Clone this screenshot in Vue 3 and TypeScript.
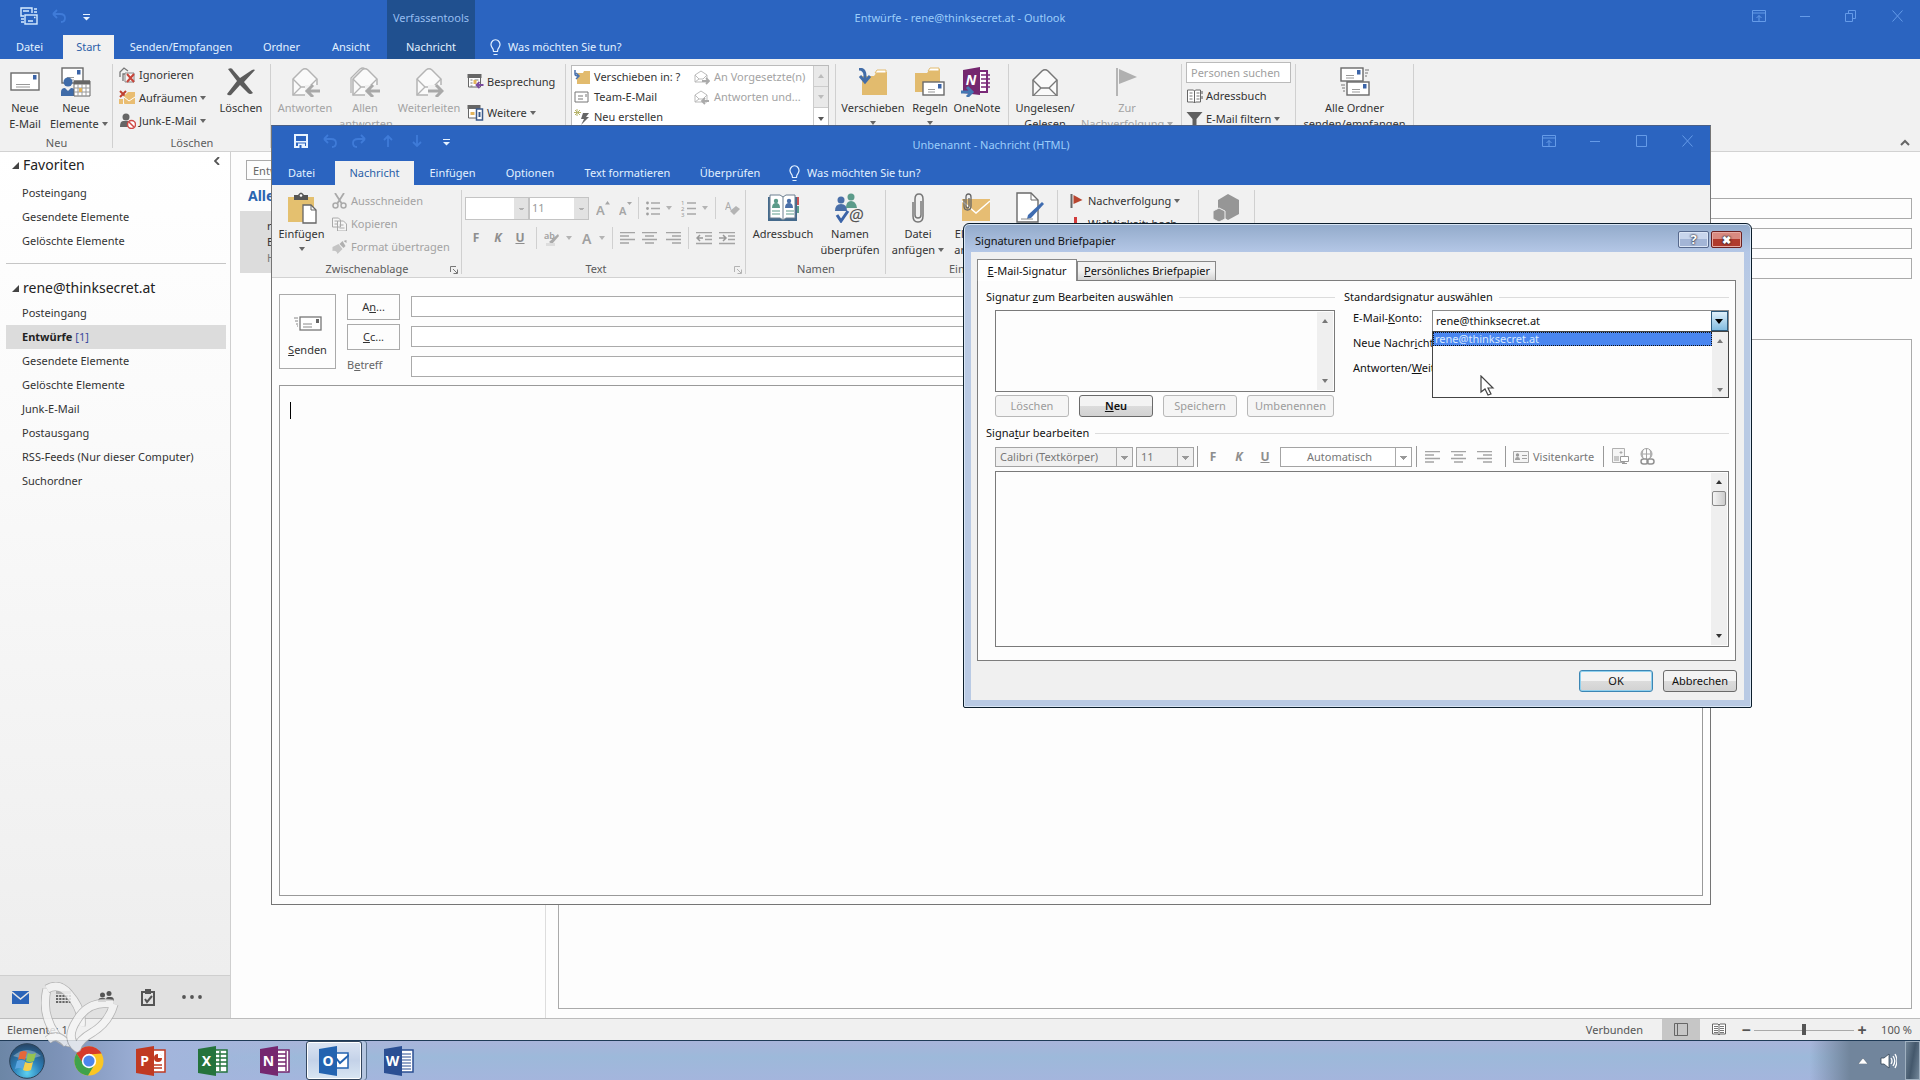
<script setup lang="ts">
import { h, ref } from 'vue'

type IconDef = [number, number, string]

const envelope = (x: number, y: number, w: number, hh: number) =>
  `<rect x="${x}" y="${y}" width="${w}" height="${hh}" fill="#fff" stroke="#6a6a6a" stroke-width="1.4"/>` +
  `<rect x="${x + w - 6}" y="${y + 2}" width="3.5" height="4.5" fill="#3b64a8"/>` +
  `<path d="M${x + 5} ${y + hh - 5.5}h${w - 14}M${x + 5} ${y + hh - 3}h${w - 14}" stroke="#999" stroke-width="1"/>`

const openMail = (c: string) =>
  `<path d="M3 12 12 3Q15 .5 18 3l9 9v16H3z" fill="#fafafa" stroke="${c}" stroke-width="1.5"/>` +
  `<path d="M3 12l8 8h8l8-8M3 28l8-8M27 28l-8-8" fill="none" stroke="${c}" stroke-width="1.3"/>`

const officeTile = (letter: string, color: string, sheet: string) =>
  `<rect x="13" y="4" width="16" height="22" fill="#fff" stroke="${color}" stroke-width="1.5"/>${sheet}` +
  `<path d="M0 3 18 0v30L0 27z" fill="${color}"/>` +
  `<text x="8.5" y="20" text-anchor="middle" font-family="Noto Sans, sans-serif" font-weight="700" font-size="14" fill="#fff">${letter}</text>`

const icons: Record<string, IconDef> = {
  sendAll: [18, 18, '<g fill="none" stroke="#d8ecff" stroke-width="1.4"><path d="M12 6V1H1v8h3M14 2h3M14 5h3"/><rect x="5" y="8" width="12" height="9"/><path d="M3 4h6M1 12h3M1 15h3M8 14h5"/><path d="M14 10.500h1.500"/></g>'],
  undo: [14, 14, '<path d="M1 5h7q5 0 5 4t-4 4M1 5l4-4M1 5l4 4" fill="none" stroke="#3f7bd8" stroke-width="1.800"/>'],
  redo: [14, 14, '<path d="M13 5H6Q1 5 1 9t4 4M13 5 9 1M13 5 9 9" fill="none" stroke="#3f7bd8" stroke-width="1.800"/>'],
  up: [14, 14, '<path d="M7 13V2M3 6l4-4 4 4" fill="none" stroke="#3f7bd8" stroke-width="1.800"/>'],
  down: [14, 14, '<path d="M7 1v11M3 8l4 4 4-4" fill="none" stroke="#3f7bd8" stroke-width="1.800"/>'],
  more: [7, 7, '<path d="M0 .5h7" stroke="#e6f2ff"/><path d="M0 3h7L3.500 6.500z" fill="#e6f2ff"/>'],
  save: [14, 14, '<path d="M1 1h12v12H1z" fill="none" stroke="#e9f4ff" stroke-width="2"/><path d="M1 7h12v1.500H1zM4 9.500h7V14H4z" fill="#e9f4ff"/><path d="M5.500 11h2v3h-2z" fill="#2b64c0"/>'],
  ribbonOpt: [14, 12, '<path d="M.5.5h13v11H.5zM.5 3h13M7 11V5.500M4.500 8 7 5.500 9.500 8" fill="none" stroke="#659be8"/>'],
  min: [10, 12, '<path d="M0 6.500h10" stroke="#659be8"/>'],
  restore: [12, 12, '<path d="M.5 3.500h7v8h-7zM3.500 3V.5h7v8H8" fill="none" stroke="#659be8"/>'],
  max: [11, 12, '<path d="M.5.5h10v11H.5z" fill="none" stroke="#659be8"/>'],
  close: [11, 12, '<path d="M.5.5l10 11M10.500.5l-10 11" stroke="#659be8"/>'],
  bulb: [11, 17, '<path d="M3.500 12.500Q3.500 10 2 8.500-.5 4.500 3 1.500q2.500-1.500 5 0 3.500 3 1 7Q7.500 10 7.500 12.500zM3.500 15.500h4" fill="none" stroke="#e0efff" stroke-width="1.2"/>'],
  newMail: [30, 20, envelope(1, 1, 28, 17)],
  newItems: [30, 30, envelope(1, 1, 21, 15) + '<circle cx="7" cy="15" r="4.500" fill="#3f6ba8"/><path d="M0 29v-4q0-4 4-4l3 3 3-3q4 0 4 4v4z" fill="#3f6ba8"/><path d="M13 14h16v15H13z" fill="#fff" stroke="#666"/><path d="M13 13.500h16v4H13z" fill="#666"/><path d="M13 21h16M13 25h16M17 17v12M21 17v12M25 17v12" stroke="#999"/><path d="M18 21h3v4h-3z" fill="#e2b55d"/>'],
  ignore: [17, 16, '<path d="M1 10V5l4-4 4 3M4 14V7h9" fill="none" stroke="#777" stroke-width="1.300"/><path d="M6 6h9v9H6z" fill="#f6f6f6" stroke="#888"/><path d="M8 7l7 8M15 7l-7 8" stroke="#c8453a" stroke-width="2"/>'],
  clean: [17, 16, '<path d="M1 1l6 6M7 1 1 7" stroke="#c04030" stroke-width="2"/><path d="M5 6l4-4h7v12H5z" fill="#e9bd72"/><path d="M5 7l5 4 6-4M2 9l3 5" fill="none" stroke="#fff"/><path d="M0 9h4v5H0z" fill="#e9bd72"/>'],
  junk: [17, 16, '<circle cx="7" cy="4" r="3.500" fill="#666"/><path d="M1 14q0-6 3-6h6q3 0 3 6z" fill="#666"/><circle cx="12.500" cy="11.500" r="4" fill="#fff" stroke="#cf4a45" stroke-width="1.500"/><path d="M10 9l5 5" stroke="#cf4a45" stroke-width="1.500"/>'],
  del: [30, 28, '<path d="M2 1q4-2 5 1l7 8L26 2q2-1 3 0L18 14q4 5 9 11-3 2-5 0l-8-8-9 10q-3 1-4-1L11 13z" fill="#5c5c5c"/>'],
  reply: [30, 30, openMail('#b4b4b4') + '<path d="M15 18h15v12H15z" fill="#f1f1f1"/><path d="M30 24H18M23 18l-6 6 6 6" fill="none" stroke="#a9a9a9" stroke-width="3"/>'],
  replyAll: [30, 30, '<path d="M1 26V11l9-9q3-2 5 0" fill="none" stroke="#b4b4b4" stroke-width="1.300"/>' + openMail('#b4b4b4') + '<path d="M15 18h15v12H15z" fill="#f1f1f1"/><path d="M30 24H18M23 18l-6 6 6 6" fill="none" stroke="#a9a9a9" stroke-width="3"/>'],
  forward: [30, 30, openMail('#b4b4b4') + '<path d="M14 18h16v12H14z" fill="#f1f1f1"/><path d="M14 24h13M22 18l6 6-6 6" fill="none" stroke="#a9a9a9" stroke-width="3"/>'],
  meeting: [16, 15, '<path d="M1 1h12v12H1z" fill="#fff" stroke="#666"/><path d="M0 0h14v4H0z" fill="#666"/><path d="M3 6h2M7 6h4M3 9h2M3 12h2" stroke="#777"/><path d="M6 6h3v4H6z" fill="#e2b55d"/><path d="M16 11h-6M12 8l-3 3 3 3" stroke="#7a4a9e" stroke-width="1.800" fill="none"/>'],
  further: [16, 16, '<path d="M1 1h11v12H1z" fill="#fff" stroke="#666"/><path d="M0 0h13v4H0z" fill="#666"/><path d="M3 7h4v3H3z" fill="#e2b55d"/><path d="M9 4h6v11H9z" fill="#fff" stroke="#3b5a8a" stroke-width="1.500"/><path d="M11 7h2v5h-2z" fill="#3b5a8a"/>'],
  folderIn: [16, 15, '<path d="M3 3h6l1-2h6v13H3z" fill="#e2bb6e"/><path d="M1 0v4q0 2 3 2M2 3l3 3-3 3" stroke="#4a72ae" stroke-width="1.500" fill="none"/>'],
  team: [16, 12, '<path d="M1 1h13v10H1z" fill="#fff" stroke="#777"/><path d="M4 5h5M4 8h5M12 3v3" stroke="#777"/>'],
  createNew: [16, 16, '<path d="M9 4h6l-3 4h3L7 16l3-6H7z" fill="#666"/><path d="M3 0v7M0 3.500h7M1 1l5 5M6 1 1 6" stroke="#b6b46a"/>'],
  mgr: [16, 15, '<path d="M1 5l6-4 6 4v7H1zM1 5l4 4h4l4-4M1 12l4-3" fill="none" stroke="#bbb"/><path d="M8 11h6M12 8l3 3-3 3" stroke="#aaa" stroke-width="1.800" fill="none"/>'],
  replyDone: [16, 15, '<path d="M1 5l6-4 6 4v7H1zM1 5l4 4h4l4-4M1 12l4-3" fill="none" stroke="#bbb"/><path d="M15 11H9M11 8l-3 3 3 3" stroke="#aaa" stroke-width="1.800" fill="none"/>'],
  folderBig: [32, 28, '<path d="M5 8h12l3-4h10v23H5z" fill="#e2bb6e"/><path d="M18 5l2-3h9v3z" fill="#fff" stroke="#e2bb6e"/><path d="M2 1q6 0 6 7v5M3 8l5 6 5-6" fill="none" stroke="#426da8" stroke-width="3"/>'],
  rules: [32, 30, '<path d="M1 6h12l3-4h10v23H1z" fill="#e2bb6e"/><path d="M14 4l2-3h9v3z" fill="#fff" stroke="#e2bb6e"/>' + envelope(9, 15, 21, 13)],
  oneNote: [32, 30, '<path d="M15 4h11v21H15z" fill="#fff" stroke="#7a2a78" stroke-width="2"/><path d="M20 8h9M20 12h9M20 16h9M20 20h9" stroke="#7a2a78" stroke-width="1.500"/><path d="M2 3 19 0v28L2 26z" fill="#75276f"/><text x="10" y="18" text-anchor="middle" font-family="Noto Sans, sans-serif" font-weight="700" font-size="14" fill="#fff">N</text><path d="M0 25h9M6 20l5 5-5 5" stroke="#4377b2" stroke-width="3" fill="none"/>'],
  readMail: [30, 28, openMail('#777')],
  flagBig: [24, 30, '<path d="M2 1v28" stroke="#b5b5b5" stroke-width="2"/><path d="M4 2l18 8L4 17z" fill="#b0b0b0"/>'],
  book: [16, 14, '<path d="M1 1h6l1 1 1-1h5v12H9l-1 1-1-1H1zM8 2v12" fill="#fff" stroke="#666"/><path d="M3 4h3M3 7h3M3 10h3M10 4h3M10 7h3M10 10h3" stroke="#777"/><path d="M15.500 2v3M15.500 7v3" stroke="#555"/>'],
  filter: [16, 16, '<path d="M0 1h16L10 8v8H6V8z" fill="#606060"/>'],
  sendRecv: [30, 30, envelope(1, 1, 22, 13) + '<path d="M25 3h4M25 6h3M25 9h2M1 18h4M2 21h3M3 24h2" stroke="#777"/>' + envelope(7, 15, 22, 13)],
  chevUp: [10, 8, '<path d="M1 6l4-4 4 4" fill="none" stroke="#666" stroke-width="2"/>'],
  chevLeft: [6, 8, '<path d="M5 0 1 4l4 4" fill="none" stroke="#555" stroke-width="1.800"/>'],
  tri: [7, 7, '<path d="M7 0v7H0z" fill="#444"/>'],
  navMail: [17, 13, '<path d="M0 0h17v13H0z" fill="#2b64b8"/><path d="M0 1l8.500 7L17 1" fill="none" stroke="#e4e4e4" stroke-width="1.500"/>'],
  navCal: [15, 12, '<path d="M0 0h15v3H0z" fill="#aaa"/><path d="M0 5h15M0 8h15M0 11h15" stroke="#666" stroke-width="1.800" stroke-dasharray="2.200 1"/>'],
  navPeople: [16, 13, '<g fill="#555"><circle cx="4.500" cy="4" r="2.500"/><circle cx="11" cy="2.500" r="2.500"/><path d="M0 11q0-4 3-4h3q2 0 2 4zM8 9q0-3 2-3h3q3 0 3 4H8z"/></g>'],
  navTask: [14, 17, '<path d="M1 3h12v13H1z" fill="none" stroke="#555" stroke-width="2"/><path d="M4 0h6v5H4z" fill="#555"/><path d="M4 10l2 3 5-6" fill="none" stroke="#555" stroke-width="2"/>'],
  navMore: [20, 4, '<g fill="#555"><circle cx="2" cy="2" r="1.900"/><circle cx="10" cy="2" r="1.900"/><circle cx="18" cy="2" r="1.900"/></g>'],
  paste: [32, 32, '<path d="M2 5h26v25H2z" fill="#e4c06f"/><path d="M8 3h4q3-5 6 0h4v5H8z" fill="#555"/><circle cx="15" cy="3.500" r="1.300" fill="#fff"/><path d="M17 13h8l5 5v13H17z" fill="#fff" stroke="#666" stroke-width="1.300"/><path d="M25 13v5h5" fill="none" stroke="#666"/>'],
  cut: [15, 16, '<path d="M3 0l7 11M12 0 5 11" stroke="#aaa" stroke-width="1.800"/><circle cx="3.500" cy="12.500" r="2.500" fill="none" stroke="#aaa" stroke-width="1.500"/><circle cx="11.500" cy="12.500" r="2.500" fill="none" stroke="#aaa" stroke-width="1.500"/>'],
  copy: [16, 14, '<path d="M1 1h6l2 2v7H1zM6 4h6l3 3v7H6z" fill="#f5f5f5" stroke="#aaa"/><path d="M3 4h3M3 7h3M8 8h4M8 11h5" stroke="#aaa"/>'],
  brush: [16, 14, '<path d="M1 7l6-3 4 5-5 5q-1-4-5-3z" fill="#c4c4c4"/><path d="M8 4l3-3 3 5-2 2z" fill="#b0b0b0"/><path d="M12 1l3-1v3z" fill="#aaa"/>'],
  launcher: [8, 8, '<path d="M.5 6V.5H6M3 3l4 4M7.500 3.500v4h-4" fill="none" stroke="#777"/>'],
  growA: [14, 15, '<text x="0" y="14" font-family="Noto Sans, sans-serif" font-size="13" font-weight="600" fill="#a6a6a6">A</text><path d="M9 3.500 11.500 0 14 3.500z" fill="#a6a6a6"/>'],
  shrinkA: [14, 15, '<text x="0" y="14" font-family="Noto Sans, sans-serif" font-size="11" font-weight="600" fill="#a6a6a6">A</text><path d="M8 1h5l-2.500 3z" fill="#a6a6a6"/>'],
  bullets: [14, 15, '<path d="M5 2h9M5 7.500h9M5 13h9" stroke="#a8a8a8" stroke-width="1.300"/><g fill="#a0a0a0"><circle cx="1.500" cy="2" r="1.400"/><circle cx="1.500" cy="7.500" r="1.400"/><circle cx="1.500" cy="13" r="1.400"/></g>'],
  numbering: [15, 17, '<path d="M6 3h9M6 8.500h9M6 14h9" stroke="#a8a8a8" stroke-width="1.300"/><g font-family="Noto Sans, sans-serif" font-size="6" fill="#999"><text x="0" y="5">1</text><text x="0" y="11">2</text><text x="0" y="17">3</text></g>'],
  eraser: [15, 14, '<text x="0" y="9" font-family="Noto Sans, sans-serif" font-size="10" fill="#aaa">A</text><path d="M5 10l6-5 4 3-6 6z" fill="#b4b4b4"/>'],
  marker: [16, 15, '<text x="0" y="8" font-family="Noto Sans, sans-serif" font-size="9" font-weight="600" fill="#a0a0a0">ab</text><path d="M5 11 14 3l1 2-7 8z" fill="#aaa"/><path d="M2 12h9v3H2z" fill="#ddd"/>'],
  fontA: [12, 13, '<text x="1" y="12" font-family="Noto Sans, sans-serif" font-size="14" font-weight="600" fill="#a0a0a0">A</text>'],
  alL: [15, 12, '<path d="M0 .5h15M0 4h9M0 7.500h15M0 11h9" stroke="#a4a4a4" stroke-width="1.300"/>'],
  alC: [15, 12, '<path d="M0 .5h15M3 4h9M0 7.500h15M3 11h9" stroke="#a4a4a4" stroke-width="1.300"/>'],
  alR: [15, 12, '<path d="M0 .5h15M6 4h9M0 7.500h15M6 11h9" stroke="#a4a4a4" stroke-width="1.300"/>'],
  outdent: [16, 13, '<path d="M0 .5h16M9 4h7M9 7.500h7M0 11.500h16" stroke="#a4a4a4" stroke-width="1.300"/><path d="M7 6H1M4 3 1 6l3 3" stroke="#999" fill="none" stroke-width="1.500"/>'],
  indent: [16, 13, '<path d="M0 .5h16M9 4h7M9 7.500h7M0 11.500h16" stroke="#a4a4a4" stroke-width="1.300"/><path d="M0 6h6M4 3l3 3-3 3" stroke="#999" fill="none" stroke-width="1.500"/>'],
  addrBig: [32, 28, '<path d="M1 3h29v24H1z" fill="#446a8c"/><path d="M3 1h10l3 2 3-2h9v23H19l-3 2-3-2H3zM16 3v22" fill="#fff" stroke="#6d7f90"/><circle cx="9" cy="7" r="2.200" fill="#5c9b8a"/><path d="M5 14q0-5 4-5t4 5z" fill="#5c9b8a"/><circle cx="22" cy="7" r="2.200" fill="#4a6fa8"/><path d="M18 14q0-5 4-5t4 5z" fill="#4a6fa8"/><path d="M5 17h8M5 20h8M19 17h8M19 20h8" stroke="#5c9b8a"/><path d="M30 3h2v8h-2z" fill="#c55"/><path d="M30 12h2v7h-2z" fill="#5c9b8a"/>'],
  checkNames: [32, 30, '<g fill="#4a6fa8"><circle cx="7" cy="7" r="3.500"/><path d="M1 18q0-7 6-7t6 7z"/></g><g fill="#5c9b8a"><circle cx="17" cy="4" r="3.500"/><path d="M12 15q0-7 5-7t6 7z"/></g><path d="M3 22l4 6 7-10" fill="none" stroke="#3b64a8" stroke-width="3"/><text x="15" y="28" font-family="Noto Sans, sans-serif" font-size="17" fill="#555">@</text>'],
  clip: [12, 30, '<path d="M9 8v14q0 3-3 3t-3-3V6q0-5 4-5t4 5v17q0 6-5 6t-5-6V9" fill="none" stroke="#777" stroke-width="1.500"/>'],
  attachItem: [30, 30, '<path d="M1 6h28v22H1z" fill="#e6bd73"/><path d="M1 8l14 12L29 8" fill="none" stroke="#fff" stroke-width="1.500"/><path d="M8 5v8q0 2-1.500 2T5 13V4q0-3 2.500-3T10 4v9q0 4-3.500 4T3 13V6" fill="none" stroke="#666" stroke-width="1.300"/>'],
  signature: [30, 32, '<path d="M2 1h14l7 7v22H2z" fill="#fff" stroke="#6a6a6a" stroke-width="1.400"/><path d="M16 1v7h7" fill="none" stroke="#6a6a6a"/><path d="M27 10l2 2-13 14-4 1 1-4z" fill="#3f6cb0"/><path d="M6 27h12" stroke="#888"/>'],
  flagRed: [12, 14, '<path d="M1 0v14" stroke="#666" stroke-width="2"/><path d="M3 1l9 5-9 4z" fill="#b8452f"/>'],
  bang: [12, 14, '<path d="M5 0v8M5 11v2" stroke="#d23b3b" stroke-width="3"/>'],
  cube: [28, 30, '<path d="M16 1l11 6v14l-11 6-10-6V7z" fill="#969696"/><path d="M7 15l6 3v8l-6 3-6-3v-8z" fill="#969696" stroke="#f1f1f1"/>'],
  send: [28, 15, '<rect x="6" y="1" width="21" height="13" fill="#fff" stroke="#777" stroke-width="1.300"/><path d="M22 3h3v4h-3z" fill="#666"/><path d="M9 8h9M9 11h9M0 2h4M1 5h3M2 8h2M3 10h1" stroke="#888"/>'],
  card: [16, 12, '<path d="M.5.5h15v11H.5z" fill="#f4f4f4" stroke="#a8a8a8"/><circle cx="4.500" cy="4" r="1.700" fill="#999"/><path d="M2 9q0-3 2.500-3T7 9zM9 4h5v1H9zM9 7h5v1H9z" fill="#a0a0a0"/>'],
  picture: [17, 16, '<path d="M.5.5h12v14H.5z" fill="#f5f5f5" stroke="#b0b0b0"/><path d="M2 8h5v5H2z" fill="#c8c8c8"/><path d="M9 3v3M7.500 4.500h3" stroke="#aaa"/><path d="M8.500 8.500h8v5h-8zM12 14v2M10 15.500h5" fill="#fff" stroke="#999"/>'],
  link: [17, 17, '<circle cx="7.500" cy="6" r="5.500" fill="none" stroke="#a4a4a4"/><path d="M2 6h11M7.500 0v12M4 2q-2 4 0 8M11 2q2 4 0 8" stroke="#a4a4a4" fill="none"/><rect x="2" y="11" width="7" height="5" rx="2.500" fill="#fff" stroke="#929292" stroke-width="1.500"/><rect x="8" y="11" width="7" height="5" rx="2.500" fill="none" stroke="#929292" stroke-width="1.500"/>'],
  cursor: [16, 24, '<path d="M1 1v16l4-3 3 6 3-1-3-6h5z" fill="#fff" stroke="#444" stroke-width="1.200"/>'],
  viewNormal: [14, 13, '<path d="M.5.5h13v12H.5zM3.500.5v12" fill="none" stroke="#666"/>'],
  viewRead: [14, 13, '<path d="M.5 1H6l1 1 1-1h5.500v10H8l-1 1-1-1H.5zM7 2v10" fill="#fff" stroke="#666"/><path d="M2 3.500h4M2 5.500h4M2 7.500h4M2 9.500h4M8 3.500h4M8 5.500h4M8 7.500h4M8 9.500h4" stroke="#777"/>'],
  start: [36, 36, '<defs><radialGradient id="orb" cx=".5" cy=".85" r=".8"><stop offset="0" stop-color="#5cd0f0"/><stop offset=".5" stop-color="#2c7fb8"/><stop offset="1" stop-color="#274a6e"/></radialGradient></defs><circle cx="18" cy="18" r="17.300" fill="url(#orb)" stroke="#2b4156"/><path d="M4 13q14-12 28 0-14 5-28 0z" fill="#fff" opacity=".3"/><path d="M11 9q4-2 7 0l-2 8q-4-2-7 0z" fill="#e5683a"/><path d="M19 10q4 2 8 0l-2 8q-4 2-8 0z" fill="#94c352"/><path d="M8 18q4-2 8 0l-2 8q-4-2-8 0z" fill="#5ba5e0"/><path d="M16 19q4 2 8 0l-2 8q-4 2-8 0z" fill="#f6cf4e"/>'],
  chrome: [30, 30, '<circle cx="15" cy="15" r="14.500" fill="#fbc624"/><path d="M2.500 7.500A14.500 14.500 0 0 1 27.500 7.500L15 8.500 9 18z" fill="#d63a2c"/><path d="M2.500 7.500A14.500 14.500 0 0 0 14 29.500L20 19.500 9.500 18z" fill="#3fa24a"/><circle cx="15" cy="15" r="7.200" fill="#fff"/><circle cx="15" cy="15" r="5.600" fill="#4d86ec"/>'],
  ppt: [30, 30, officeTile('P', '#c03a22', '<circle cx="22" cy="12" r="4" fill="#c03a22"/><path d="M22 12V7.500a4.500 4.500 0 0 1 4.500 4.500z" fill="#fff"/><path d="M18 19h8M18 22h8" stroke="#c03a22" stroke-width="1.500"/>')],
  excel: [30, 30, officeTile('X', '#24733c', '<path d="M18 8h11M18 12h11M18 16h11M18 20h11M22 5v20" stroke="#24733c" stroke-width="1.400"/>')],
  onote: [30, 30, officeTile('N', '#75276f', '<path d="M18 8h8M18 12h8M18 16h8M18 20h8M26 5v20" stroke="#75276f" stroke-width="1.400"/>')],
  word: [30, 30, officeTile('W', '#2b4f93', '<path d="M18 8h9M18 11h9M18 14h9M18 17h9M18 20h9M18 23h9" stroke="#2b4f93" stroke-width="1.200"/>')],
  outlook: [30, 30, '<rect x="13" y="7" width="16" height="15" fill="#fff" stroke="#2363b0" stroke-width="1.500"/><path d="M17 12l4 5 9-8" fill="none" stroke="#2363b0" stroke-width="2"/><path d="M0 3 18 0v30L0 27z" fill="#2363b0"/><text x="9" y="20" text-anchor="middle" font-family="Noto Sans, sans-serif" font-weight="700" font-size="14" fill="#fff">O</text>'],
  trayUp: [10, 6, '<path d="M0 6l5-6 5 6z" fill="#fff" stroke="#456" stroke-width=".5"/>'],
  speaker: [17, 16, '<path d="M1 5h3l5-4v14l-5-4H1z" fill="#fff" stroke="#345" stroke-width=".8"/><path d="M11 5q2 3 0 6M13 3q3.500 5 0 10M15 1q4 7 0 14" stroke="#fff" fill="none" stroke-width="1.300"/>'],
  ribbonMark: [80, 72, (() => {
    const band = (d: string) =>
      `<path d="${d}" fill="none" stroke="#aaa" stroke-width="9" stroke-linejoin="round"/><path d="${d}" fill="none" stroke="#f6f6f6" stroke-width="7.4" stroke-linejoin="round"/>`
    return '<g opacity=".8">' + band('M6 7Q0 32 15 53Q22 62 36 61') + band('M6 7Q18 0 28 12Q42 28 40 44') + band('M7 58Q16 50 26 62') + band('M72 22Q48 18 36 38Q24 56 36 66Q38 58 52 50Q68 40 73 22') + '</g>'
  })()],
}

const Ico = (props: { n: string }) => {
  const [w, ht, markup] = icons[props.n]
  return h('svg', { width: w, height: ht, viewBox: `0 0 ${w} ${ht}`, 'aria-hidden': 'true', innerHTML: markup })
}
Ico.props = ['n']

const mainTabs = [
  { t: 'Datei', w: 63 },
  { t: 'Start', w: 51, on: true },
  { t: 'Senden/Empfangen', w: 134 },
  { t: 'Ordner', w: 67 },
  { t: 'Ansicht', w: 72 },
]
const mailTabs = [
  { t: 'Datei', w: 63 },
  { t: 'Nachricht', w: 79, on: true },
  { t: 'Einfügen', w: 77 },
  { t: 'Optionen', w: 78 },
  { t: 'Text formatieren', w: 117 },
  { t: 'Überprüfen', w: 88 },
]
const folders = ['Posteingang', 'Entwürfe', 'Gesendete Elemente', 'Gelöschte Elemente', 'Junk-E-Mail', 'Postausgang', 'RSS-Feeds (Nur dieser Computer)', 'Suchordner']
const favourites = ['Posteingang', 'Gesendete Elemente', 'Gelöschte Elemente']
const tasks = [
  { n: 'chrome', t: 'Chrome' },
  { n: 'ppt', t: 'PowerPoint' },
  { n: 'excel', t: 'Excel' },
  { n: 'onote', t: 'OneNote' },
  { n: 'outlook', t: 'Outlook' },
  { n: 'word', t: 'Word' },
]
const zoom = ref(50)
</script>

<template>
  <div class="desktop">
    <main class="outlook">
      <header class="head">
        <div class="titlebar">
          <div class="qat">
            <Ico n="sendAll" /><Ico n="undo" class="q-undo" /><Ico n="more" class="q-more" />
          </div>
          <h1 class="title">Entwürfe - rene@thinksecret.at - Outlook</h1>
          <div class="winctl">
            <button aria-label="Menüband"><Ico n="ribbonOpt" /></button>
            <button aria-label="Minimieren"><Ico n="min" /></button>
            <button aria-label="Verkleinern"><Ico n="restore" /></button>
            <button aria-label="Schließen"><Ico n="close" /></button>
          </div>
        </div>
        <nav class="tabs">
          <button v-for="t in mainTabs" :key="t.t" class="tab" :class="{ on: t.on }" :style="{ width: t.w + 'px' }">{{ t.t }}</button>
          <button class="ctxtab"><span>Verfassentools</span><b>Nachricht</b></button>
          <button class="tell"><Ico n="bulb" />Was möchten Sie tun?</button>
        </nav>
      </header>

      <section class="ribbon">
        <div class="grp" style="width: 113px">
          <div class="cont">
            <button class="big" style="width: 50px"><i><Ico n="newMail" /></i>Neue<br />E-Mail</button>
            <button class="big" style="width: 52px"><i><Ico n="newItems" /></i>Neue<br />Elemente<u class="dd"></u></button>
          </div>
          <div class="lbl">Neu</div>
        </div>
        <div class="grp" style="width: 158px">
          <div class="cont pad6">
            <div class="rows" style="width: 98px">
              <button class="row"><Ico n="ignore" />Ignorieren</button>
              <button class="row"><Ico n="clean" />Aufräumen<u class="dd"></u></button>
              <button class="row"><Ico n="junk" />Junk-E-Mail<u class="dd"></u></button>
            </div>
            <button class="big" style="width: 48px"><i><Ico n="del" /></i>Löschen</button>
          </div>
          <div class="lbl">Löschen</div>
        </div>
        <div class="grp" style="width: 295px">
          <div class="cont">
            <button class="big off" style="width: 68px" disabled><i><Ico n="reply" /></i>Antworten</button>
            <button class="big off" style="width: 52px" disabled><i><Ico n="replyAll" /></i>Allen<br />antworten</button>
            <button class="big off" style="width: 76px" disabled><i><Ico n="forward" /></i>Weiterleiten</button>
            <div class="rows tall">
              <button class="row"><Ico n="meeting" />Besprechung</button>
              <button class="row"><Ico n="further" />Weitere<u class="dd"></u></button>
            </div>
          </div>
        </div>
        <div class="grp" style="width: 270px">
          <div class="gallery">
            <div class="gcells">
              <button><Ico n="folderIn" />Verschieben in: ?</button>
              <button class="off" disabled><Ico n="mgr" />An Vorgesetzte(n)</button>
              <button><Ico n="team" />Team-E-Mail</button>
              <button class="off" disabled><Ico n="replyDone" />Antworten und...</button>
              <button><Ico n="createNew" />Neu erstellen</button>
            </div>
            <div class="gscroll"><span><i class="ar up"></i></span><span><i class="ar"></i></span><span class="gmore"><i class="ar"></i></span></div>
          </div>
        </div>
        <div class="grp" style="width: 173px">
          <div class="cont">
            <button class="big" style="width: 74px"><i><Ico n="folderBig" /></i>Verschieben<u class="dd solo"></u></button>
            <button class="big" style="width: 40px"><i><Ico n="rules" /></i>Regeln<u class="dd solo"></u></button>
            <button class="big" style="width: 54px"><i><Ico n="oneNote" /></i>OneNote</button>
          </div>
        </div>
        <div class="grp" style="width: 173px">
          <div class="cont">
            <button class="big" style="width: 72px"><i><Ico n="readMail" /></i>Ungelesen/<br />Gelesen</button>
            <button class="big off" style="width: 92px" disabled><i><Ico n="flagBig" /></i>Zur<br />Nachverfolgung<u class="dd"></u></button>
          </div>
        </div>
        <div class="grp" style="width: 114px">
          <div class="find">
            <input type="text" placeholder="Personen suchen" aria-label="Personen suchen" />
            <button class="row"><Ico n="book" />Adressbuch</button>
            <button class="row"><Ico n="filter" />E-Mail filtern<u class="dd"></u></button>
          </div>
        </div>
        <div class="grp" style="width: 118px">
          <div class="cont">
            <button class="big wide"><i><Ico n="sendRecv" /></i>Alle Ordner<br />senden/empfangen</button>
          </div>
        </div>
        <button class="collapse" aria-label="Menüband reduzieren"><Ico n="chevUp" /></button>
      </section>

      <div class="body">
        <aside class="side">
          <div class="sidein">
            <h2 class="fav"><Ico n="tri" />Favoriten<Ico n="chevLeft" class="pull" /></h2>
            <ul>
              <li v-for="f in favourites" :key="f"><a href="#">{{ f }}</a></li>
            </ul>
            <hr />
            <h2><Ico n="tri" />rene@thinksecret.at</h2>
            <ul>
              <li v-for="f in folders" :key="f" :class="{ sel: f === 'Entwürfe' }">
                <a href="#">{{ f }}<em v-if="f === 'Entwürfe'"> [1]</em></a>
              </li>
            </ul>
          </div>
          <nav class="modules">
            <Ico n="navMail" /><Ico n="navCal" /><Ico n="navPeople" /><Ico n="navTask" /><Ico n="navMore" />
          </nav>
        </aside>
        <section class="list">
          <input class="search" type="text" value="Entwürfe" aria-label="Suche" />
          <b class="all">Alle</b>
          <div class="msg"><span>r</span><span>E</span><small>H</small></div>
        </section>
        <section class="reading">
          <input aria-label="An" /><input aria-label="Cc" /><input aria-label="Betreff" />
          <div class="page"></div>
        </section>
      </div>

      <footer class="status">
        <span>Elemente: 1</span>
        <span class="conn">Verbunden</span>
        <button class="view on" aria-label="Normal"><Ico n="viewNormal" /></button>
        <button class="view" aria-label="Lesen"><Ico n="viewRead" /></button>
        <button class="zb" aria-label="Verkleinern">−</button>
        <input v-model="zoom" class="zoom" type="range" min="0" max="100" aria-label="Zoom" />
        <button class="zb" aria-label="Vergrößern">+</button>
        <span class="pct">100 %</span>
      </footer>
    </main>

    <footer class="taskbar">
      <button class="orb" aria-label="Start"><Ico n="start" /></button>
      <button v-for="t in tasks" :key="t.n" class="task" :class="{ on: t.n === 'outlook' }" :aria-label="t.t"><Ico :n="t.n" /></button>
      <div class="tray"><Ico n="trayUp" /><Ico n="speaker" /><button class="peek" aria-label="Desktop anzeigen"></button></div>
    </footer>
    <Ico n="ribbonMark" class="mark" />

    <section class="compose">
      <header class="head">
        <div class="titlebar">
          <div class="qat">
            <Ico n="save" /><Ico n="undo" /><Ico n="redo" /><Ico n="up" /><Ico n="down" /><Ico n="more" class="q-last" />
          </div>
          <h2 class="title">Unbenannt - Nachricht (HTML)</h2>
          <div class="winctl">
            <button aria-label="Menüband"><Ico n="ribbonOpt" /></button>
            <button aria-label="Minimieren"><Ico n="min" /></button>
            <button aria-label="Maximieren"><Ico n="max" /></button>
            <button aria-label="Schließen"><Ico n="close" /></button>
          </div>
        </div>
        <nav class="tabs">
          <button v-for="t in mailTabs" :key="t.t" class="tab" :class="{ on: t.on }" :style="{ width: t.w + 'px' }">{{ t.t }}</button>
          <button class="tell"><Ico n="bulb" />Was möchten Sie tun?</button>
        </nav>
      </header>
      <div class="ribbon">
        <div class="grp" style="width: 190px">
          <div class="cont">
            <button class="big" style="width: 59px"><i><Ico n="paste" /></i>Einfügen<u class="dd solo"></u></button>
            <div class="rows">
              <button class="row off" disabled><Ico n="cut" />Ausschneiden</button>
              <button class="row off" disabled><Ico n="copy" />Kopieren</button>
              <button class="row off" disabled><Ico n="brush" />Format übertragen</button>
            </div>
          </div>
          <div class="lbl">Zwischenablage<Ico n="launcher" class="launch" /></div>
        </div>
        <div class="grp" style="width: 284px">
          <div class="fmt">
            <div class="fline">
              <select class="fsel" aria-label="Schriftart" disabled><option></option></select>
              <select class="fsel" aria-label="Schriftgrad" disabled><option>11</option></select>
              <Ico n="growA" class="ml7" /><Ico n="shrinkA" class="ml9" /><s class="ml5"></s>
              <Ico n="bullets" class="ml7" /><u class="dd g"></u><Ico n="numbering" class="ml9" /><u class="dd g"></u><s class="ml7"></s><Ico n="eraser" class="ml9" />
            </div>
            <div class="fline two">
              <b>F</b><b class="it">K</b><b class="un">U</b><s class="ml5"></s>
              <Ico n="marker" class="ml7" /><u class="dd g"></u><Ico n="fontA" class="ml9" /><u class="dd g"></u><s class="ml7"></s>
              <Ico n="alL" class="ml7" /><Ico n="alC" class="ml7" /><Ico n="alR" class="ml9" /><s class="ml7"></s><Ico n="outdent" class="ml7" /><Ico n="indent" class="ml7" />
            </div>
          </div>
          <div class="lbl mid">Text<Ico n="launcher" class="launch faint" /></div>
        </div>
        <div class="grp" style="width: 140px">
          <div class="cont">
            <button class="big" style="width: 74px"><i><Ico n="addrBig" /></i>Adressbuch</button>
            <button class="big" style="width: 60px"><i><Ico n="checkNames" /></i>Namen<br />überprüfen</button>
          </div>
          <div class="lbl">Namen</div>
        </div>
        <div class="grp" style="width: 172px">
          <div class="cont">
            <button class="big" style="width: 64px"><i><Ico n="clip" /></i>Datei<br />anfügen<u class="dd"></u></button>
            <button class="big" style="width: 52px"><i><Ico n="attachItem" /></i>Element<br />anfügen</button>
            <button class="big" style="width: 56px"><i><Ico n="signature" /></i>Signatur</button>
          </div>
          <div class="lbl">Einfügen</div>
        </div>
        <div class="grp" style="width: 141px">
          <div class="cont pad10">
            <div class="rows">
              <button class="row"><Ico n="flagRed" />Nachverfolgung<u class="dd"></u></button>
              <button class="row"><Ico n="bang" />Wichtigkeit: hoch</button>
            </div>
          </div>
        </div>
        <div class="grp" style="width: 56px">
          <div class="cont"><button class="big" style="width: 54px" aria-label="Add-Ins"><i><Ico n="cube" /></i></button></div>
        </div>
      </div>
      <form class="mail" @submit.prevent>
        <button class="sendbtn"><Ico n="send" /><span><u>S</u>enden</span></button>
        <div class="addr">
          <button class="to">A<u>n</u>...</button><input type="text" aria-label="An" />
          <button class="to"><u>C</u>c...</button><input type="text" aria-label="Cc" />
          <label for="subj">B<u>e</u>treff</label><input id="subj" type="text" />
        </div>
      </form>
      <div class="editor"><span class="caret"></span></div>
    </section>

    <section class="dialog" role="dialog" aria-label="Signaturen und Briefpapier">
      <header class="dtitle">
        <span>Signaturen und Briefpapier</span>
        <button class="qb" aria-label="Hilfe">?</button>
        <button class="qb xb" aria-label="Schließen">✖</button>
      </header>
      <div class="dcont">
        <div class="dtabs"><button class="dtab on"><u>E</u>-Mail-Signatur</button><button class="dtab"><u>P</u>ersönliches Briefpapier</button></div>
        <div class="panel">
          <div class="cols">
            <div class="lcol">
              <h3><span>Signatur <u>z</u>um Bearbeiten auswählen</span></h3>
              <div class="box sigs"><div class="fill"></div><div class="sb"><span class="ar up"></span><span class="ar"></span></div></div>
              <div class="btns">
                <button disabled>Löschen</button><button class="strong"><u>N</u>eu</button><button disabled>Speichern</button><button class="w87" disabled>Umbenennen</button>
              </div>
            </div>
            <div class="rcol">
              <h3><span>Standardsignatur auswählen</span></h3>
              <div class="fields">
                <label for="konto">E-Mail-<u>K</u>onto:</label>
                <label>Neue Nachr<u>i</u>chten:</label>
                <label>Antworten/<u>W</u>eiterleitungen:</label>
                <div class="combo">
                  <select id="konto"><option>rene@thinksecret.at</option></select>
                  <span class="cbtn"></span>
                  <div class="drop">
                    <ul role="listbox"><li role="option">rene@thinksecret.at</li></ul>
                    <div class="sb"><span class="ar up"></span><span class="ar"></span></div>
                  </div>
                  <Ico n="cursor" class="cursor" />
                </div>
              </div>
            </div>
          </div>
          <h3 class="edit"><span>Signa<u>t</u>ur bearbeiten</span></h3>
          <div class="bar">
            <select class="w138" aria-label="Schriftart" disabled><option>Calibri (Textkörper)</option></select>
            <select class="w58" aria-label="Schriftgrad" disabled><option>11</option></select>
            <s></s><b class="first">F</b><b class="it">K</b><b class="un">U</b>
            <select class="auto" aria-label="Farbe" disabled><option>Automatisch</option></select>
            <s></s><span class="al"><Ico n="alL" /><Ico n="alC" /><Ico n="alR" /></span><s></s>
            <button class="vk" disabled><Ico n="card" />Visitenkarte</button><s></s>
            <span class="pic"><Ico n="picture" /><Ico n="link" /></span>
          </div>
          <div class="box text"><textarea aria-label="Signatur bearbeiten"></textarea><div class="sb dark"><span class="ar up"></span><span class="thumb"></span><span class="ar"></span></div></div>
        </div>
        <div class="dfoot"><button class="ok">OK</button><button>Abbrechen</button></div>
      </div>
    </section>
  </div>
</template>

<style>
html, body { margin: 0; }
</style>
<style scoped>
* { box-sizing: border-box; }
.desktop { position: relative; height: 100vh; min-height: 960px; overflow: hidden; display: flex; flex-direction: column; font: 11px/16px "Noto Sans", "Open Sans", sans-serif; color: #333; background: #fdfdfd; }
button, input, select, textarea { font: inherit; color: inherit; margin: 0; padding: 0; border: 0; background: none; border-radius: 0; min-width: 0; }
button { white-space: nowrap; }
select { appearance: none; opacity: 1; }
svg { flex: none; display: block; }
h1, h2, h3, ul { margin: 0; padding: 0; font: inherit; list-style: none; }
a { color: inherit; text-decoration: none; }
.outlook { flex: 1; min-height: 0; display: flex; flex-direction: column; }
.head { background: #2b64c0; flex: none; color: #e2f1ff; }
.titlebar { height: 35px; display: grid; grid-template-columns: 1fr auto 1fr; align-items: center; }
.qat { display: flex; align-items: center; padding: 0 0 4px 20px; }
.q-undo { margin-left: 14px; }
.q-more { margin: 3px 0 0 17px; }
.title { color: #9ccdfa; }
.winctl { display: flex; justify-content: flex-end; padding: 0 0 4px; }
.winctl button { width: 46px; display: flex; justify-content: center; }
.tabs { height: 24px; display: flex; align-items: flex-end; }
.tab { height: 24px; text-align: center; }
.tab:first-child { padding-right: 4px; }
.tab.on { background: #f1f1f1; color: #2b5fa8; }
.ctxtab { width: 88px; height: 59px; background: #20508f; display: flex; flex-direction: column; justify-content: space-between; padding: 10px 0 4px; align-items: center; }
.ctxtab span { color: #96bdf0; }
.ctxtab b { font-weight: 400; }
.tell { height: 24px; display: flex; align-items: center; gap: 7px; padding-left: 15px; }
.ribbon { height: 93px; flex: none; display: flex; background: #f1f1f1; border-bottom: 1px solid #d2d2d2; }
.grp { flex: none; display: flex; flex-direction: column; background: linear-gradient(#d0d0d0, #d0d0d0) right 5px / 1px 84px no-repeat; }
.cont { height: 76px; display: flex; padding-top: 4px; }
.pad6 { padding-left: 6px; }
.pad10 { padding-left: 10px; }
.big { flex: none; text-align: center; align-self: flex-start; line-height: 16px; }
.big i { height: 37px; display: flex; align-items: center; justify-content: center; }
.big.wide { width: 117px; }
.off { color: #a3a3a3; }
.dd { display: inline-block; width: 0; height: 0; border: 3px solid transparent; border-top: 4px solid #666; border-bottom: 0; margin-left: 3px; vertical-align: 2px; text-decoration: none; }
.row .dd { margin-left: 0; }
.dd.solo { display: block; margin: 5px auto 0; }
.dd.g { border-top-color: #b4b4b4; margin-left: 6px; }
.off .dd { border-top-color: #aaa; }
.rows { display: flex; flex-direction: column; }
.row { height: 23px; display: flex; align-items: center; gap: 3px; }
.row svg { width: 17px; }
.tall { padding-top: 3px; }
.tall .row { height: 31px; }
.lbl { height: 16px; text-align: center; color: #5c5c5c; position: relative; }
.lbl.mid { padding-right: 16px; }
.launch { position: absolute; right: 4px; top: 5px; }
.faint { opacity: .5; }
.gallery { height: 70px; margin: 6px 7px 0 5px; display: flex; background: #fff; border: 1px solid #bbb; }
.gcells { flex: 1; display: grid; grid-template-columns: 120px 1fr; grid-auto-rows: 20px; padding: 1px 0 0 2px; }
.gcells button { display: flex; align-items: center; gap: 4px; }
.gscroll { width: 15px; border-left: 1px solid #ccc; display: flex; flex-direction: column; }
.gscroll span { height: 21px; display: flex; align-items: center; justify-content: center; border-bottom: 1px solid #ccc; background: #e9e9e9; }
.gscroll span .ar { border-top-color: #bbb; border-bottom-color: #bbb; }
.gscroll .gmore { background: #fff; border: 0; }
.gscroll .gmore .ar { border-top-color: #555; }
.find { padding: 3px 0 0 4px; }
.find input { width: 105px; height: 21px; border: 1px solid #bbb; background: #fff; padding: 0 4px; display: block; margin-bottom: 1px; }
.find input::placeholder { color: #a0a0a0; opacity: 1; }
.collapse { margin: auto 10px 4px auto; }
.body { flex: 1; min-height: 0; display: flex; }
.side { width: 231px; flex: none; border-right: 1px solid #cfcfcf; display: flex; flex-direction: column; }
.sidein { flex: 1; padding: 0 4px 0 6px; background: linear-gradient(#fff 0%, #fafafa 35%, #eee 100%); }
.side h2 { height: 26px; display: flex; align-items: center; gap: 4px; font-size: 14px; padding-left: 6px; color: #222; }
.side h2.fav { margin-bottom: 3px; }
.pull { margin: 0 6px 8px auto; }
.side li { height: 24px; line-height: 24px; padding-left: 16px; }
.side li.sel { background: #dcdcdc; font-weight: 700; color: #222; }
.side em { font-style: normal; font-weight: 400; color: #3d4ba0; }
.side hr { border: 0; height: 1px; background: #c6c6c6; margin: 10px 0 11px; }
.modules { height: 43px; background: #e1e1e1; border-top: 1px solid #cfcfcf; display: flex; align-items: center; padding-left: 12px; gap: 27px; }
.list { width: 315px; flex: none; border-right: 1px solid #ddd; padding: 8px 0 0 9px; display: flex; flex-direction: column; }
.search { height: 20px; margin-left: 6px; border: 1px solid #aaa; padding-left: 6px; color: #666; flex: none; }
.all { color: #2b64b0; font-size: 14px; line-height: 31px; padding-left: 8px; }
.msg { height: 62px; background: #dcdcdc; padding: 7px 0 0 27px; display: flex; flex-direction: column; }
.msg small { font-size: 11px; color: #777; }
.reading { flex: 1; display: flex; flex-direction: column; padding: 46px 8px 9px 12px; gap: 9px; }
.reading input { height: 21px; border: 1px solid #aaa; flex: none; }
.page { flex: 1; margin-top: 51px; border: 1px solid #aaa; }
.status { height: 22px; flex: none; border-top: 1px solid #bcbcbc; background: #f0f0f0; display: flex; align-items: center; padding: 0 8px 0 7px; color: #555; }
.conn { margin: 0 19px 0 auto; }
.view { width: 38px; height: 21px; display: flex; align-items: center; justify-content: center; }
.view.on { background: #c6c6c6; }
.zb { width: 14px; font-size: 16px; font-weight: 700; line-height: 16px; }
.zoom { appearance: none; width: 100px; height: 12px; margin: 0 1px; background: linear-gradient(#aaa, #aaa) 0 6px / 100% 1px no-repeat; }
.zoom::-webkit-slider-thumb { appearance: none; width: 4px; height: 11px; background: #555; }
.pct { margin-left: 12px; }
.view + .zb { margin-left: 1px; }
.taskbar { height: 40px; flex: none; border-top: 1px solid #1f3b57; background: linear-gradient(90deg, #6c86a6, #7d93b8 60px, #a3b5dc 160px, transparent 300px, transparent calc(100% - 110px), #71859c calc(100% - 70px)), linear-gradient(#a9b4da, #9db9da 40%, #a4b5dd); display: flex; align-items: center; padding-left: 8px; }
.orb { width: 37px; display: flex; justify-content: center; }
.task { width: 62px; height: 39px; display: flex; align-items: center; justify-content: center; }
.orb + .task { margin-left: 13px; }
.task.on { width: 56px; margin-right: 6px; border: 1px solid #33465e; border-radius: 3px; background: linear-gradient(#dbe4f2, #c4d2e8 50%, #d9e6f3); box-shadow: inset 0 0 0 1px #fff, 4px 0 0 #b5c6e0, 5px 0 0 #58708c; }
.tray { margin-left: auto; height: 39px; display: flex; align-items: center; gap: 12px; }
.peek { width: 15px; height: 39px; margin-left: -4px; border: 1px solid #9fb0c0; background: linear-gradient(100deg, #6f8396, #44586c 50%, #718598); }
.mark { position: absolute; left: 41px; bottom: 26px; }

.compose { position: absolute; left: 271px; right: 209px; top: 125px; bottom: 175px; border: 1px solid #757575; border-top-color: #4a5f86; background: #fdfdfd; display: flex; flex-direction: column; }
.compose .qat { padding: 0 0 6px 22px; gap: 15px; }
.compose .title { padding-top: 2px; }
.compose .winctl { padding-bottom: 6px; }
.q-last { margin: 3px 0 0 4px; }
.fmt { height: 76px; padding: 11px 0 0 3px; }
.fline { display: flex; align-items: center; height: 24px; }
.fline s { width: 1px; height: 22px; background: #d0d0d0; }
.ml5 { margin-left: 5px; }
.ml7 { margin-left: 7px; }
.ml9 { margin-left: 9px; }
.fsel { width: 64px; height: 23px; border: 1px solid #c4c4c4; background: linear-gradient(45deg, transparent 50%, #aaa 50%) right 7px top 9px / 3px 3px no-repeat, linear-gradient(-45deg, transparent 50%, #aaa 50%) right 4px top 9px / 3px 3px no-repeat, linear-gradient(#e2e2e2, #e2e2e2) right / 14px 100% no-repeat #fff; padding-left: 2px; color: #999; }
.fsel { background: linear-gradient(#b0b0b0, #b0b0b0) right 4px top 10px / 5px 1px no-repeat, linear-gradient(#b0b0b0, #b0b0b0) right 5px top 11px / 3px 1px no-repeat, linear-gradient(#e2e2e2, #e2e2e2) right / 14px 100% no-repeat #fff; }
.fsel + .fsel { width: 60px; }
.two { margin-top: 6px; }
.two b, .bar b { color: #8e8e8e; width: 22px; text-align: center; font-weight: 700; font-size: 12px; }
.it { font-style: italic; }
.un { text-decoration: underline; }
.mail { display: flex; padding: 16px 7px 0 7px; gap: 11px; flex: none; }
.sendbtn { width: 57px; height: 75px; border: 1px solid #aaa; background: #fdfdfd; display: flex; flex-direction: column; align-items: center; justify-content: flex-end; gap: 11px; padding-bottom: 10px; }
.addr { flex: 1; display: grid; grid-template-columns: 53px 1fr; column-gap: 11px; grid-auto-rows: 30px; }
.addr .to { height: 26px; border: 1px solid #aaa; }
.addr input { height: 21px; margin-top: 2px; border: 1px solid #aaa; background: #fff; }
.addr label { padding-top: 3px; color: #666; }
.editor { flex: 1; margin: 1px 7px 8px 7px; border: 1px solid #999; padding: 16px 10px; }
.caret { display: block; width: 1px; height: 17px; background: #000; }

.dialog { position: absolute; left: 963px; top: 223px; width: 789px; border: 1px solid #0c1e2c; border-radius: 6px 6px 2px 2px; background: linear-gradient(#92aaca, #b4c7e6 28px, #b9cae4 60px, #b9cae4); box-shadow: inset 0 0 0 1px #d9e6f5; padding: 0 7px 7px; color: #111; }
.dtitle { height: 28px; display: flex; align-items: center; padding: 5px 2px 0 4px; gap: 2px; }
.dtitle span { flex: 1; }
.qb { width: 31px; height: 17px; margin-top: -2px; border: 1px solid #56688c; border-radius: 2px; background: linear-gradient(#c8d5ec 50%, #a3b5d6 50%); box-shadow: inset 0 0 0 1px #dbe5f5; color: #fff; font-weight: 700; font-size: 13px; line-height: 13px; text-shadow: 0 0 2px #223, 0 0 2px #223; }
.xb { border-color: #6b2020; background: linear-gradient(#d98a80 50%, #b03a2c 50%); box-shadow: inset 0 0 0 1px #e6aaa2; font-size: 11px; }
.dcont { background: #f0f0f0; padding: 7px 7px 8px 6px; }
.dtabs { display: flex; align-items: flex-end; height: 21px; }
.dtab { height: 19px; padding: 0 6px; border: 1px solid #888; border-bottom: 0; background: linear-gradient(#f2f2f2 50%, #d4d4d4); width: 139px; }
.dtab.on { width: 100px; height: 22px; margin-bottom: -1px; background: #fff; position: relative; }
.panel { border: 1px solid #7d7d7d; background: #fdfdfd; padding: 8px 6px 13px 8px; margin-right: 1px; }
.cols { display: flex; gap: 9px; }
.lcol { flex: none; width: 349px; }
.rcol { flex: 1; }
h3 { display: flex; align-items: center; gap: 6px; height: 16px; margin-bottom: 5px; }
h3::after { content: ""; flex: 1; height: 1px; background: #dcdcdc; }
.box { margin-left: 9px; border: 1px solid #7a7a7a; background: #fdfdfd; display: flex; padding: 1px; }
.sigs { height: 82px; }
.fill, .text textarea { flex: 1; resize: none; }
.sb { width: 16px; background: #efefef; display: flex; flex-direction: column; align-items: center; justify-content: space-between; padding: 7px 0; }
.ar { border: 3px solid transparent; border-top: 4px solid #777; border-bottom: 0; }
.ar.up { border-top: 0; border-bottom: 4px solid #777; }
.dark .ar { border-top-color: #333; }
.dark .ar.up { border-bottom-color: #333; }
.btns { margin: 3px 0 8px 9px; display: flex; gap: 10px; }
.btns button, .dfoot button { width: 74px; height: 22px; border: 1px solid #6a6a6a; border-radius: 3px; background: linear-gradient(#f3f3f3 50%, #dcdcdc 50%, #d2d2d2); }
.btns button:disabled { border-color: #b8b8b8; background: #f5f5f5; color: #9b9b9b; }
.btns .strong { font-weight: 600; }
.btns .w87 { width: 87px; }
.fields { position: relative; display: flex; flex-direction: column; padding-left: 9px; gap: 9px; }
.combo { position: absolute; left: 88px; right: 0; top: 0; height: 22px; border: 1px solid #8a8a8a; background: #fff; }
.combo select { width: 100%; height: 20px; padding-left: 3px; color: #111; }
.cbtn { position: absolute; right: 0; top: 0; width: 17px; height: 20px; border: 1px solid #2c5a7c; background: linear-gradient(#dff0fa, #82bce0); }
.cbtn::after { content: ""; position: absolute; left: 3px; top: 7px; border: 4px solid transparent; border-top: 5px solid #000; border-bottom: 0; }
.drop { position: absolute; left: -1px; right: -1px; top: 20px; height: 67px; border: 1px solid #444; background: #fdfdfd; display: flex; }
.drop ul { flex: 1; }
.drop li { height: 14px; line-height: 13px; background: #4a86f0; outline: 1px dotted #111; outline-offset: -1px; color: #d8eaff; padding-left: 2px; }
.drop .sb { padding: 7px 0 5px; }
.cursor { position: absolute; left: 47px; top: 64px; }
.bar { margin: 0 0 4px 9px; height: 21px; display: flex; align-items: center; color: #777; }
.bar select { height: 20px; border: 1px solid #a4a4a4; padding: 0 17px 0 4px; color: #777; background: linear-gradient(#999, #999) right 4px top 8px / 7px 1px no-repeat, linear-gradient(#999, #999) right 5px top 9px / 5px 1px no-repeat, linear-gradient(#999, #999) right 6px top 10px / 3px 1px no-repeat, linear-gradient(#999, #999) right 7px top 11px / 1px 1px no-repeat, linear-gradient(#aaa, #aaa) right 15px top / 1px 100% no-repeat #f0f0f0; }
.bar .w138 { width: 138px; margin-right: 3px; }
.bar .w58 { width: 58px; margin-right: 3px; }
.bar .auto { width: 132px; margin: 0 4px 0 2px; background-color: #fff; text-align: center; text-align-last: center; }
.bar s { width: 1px; height: 21px; background: #999; }
.bar b { width: 26px; }
.bar .first { margin-left: 2px; }
.al { display: flex; gap: 11px; padding: 0 13px 0 8px; }
.vk { display: flex; align-items: center; gap: 4px; padding: 0 9px 0 7px; height: 21px; }
.pic { display: flex; gap: 10px; padding-left: 8px; }
.text { height: 176px; }
.thumb { width: 14px; height: 15px; margin: 7px 0 auto; border: 1px solid #888; border-radius: 2px; background: linear-gradient(90deg, #f4f4f4, #ccc); }
.dfoot { display: flex; justify-content: flex-end; gap: 10px; padding-top: 9px; }
.dfoot .ok { border-color: #3c86b4; box-shadow: inset 0 0 0 1px #8fd0ee; }
</style>
